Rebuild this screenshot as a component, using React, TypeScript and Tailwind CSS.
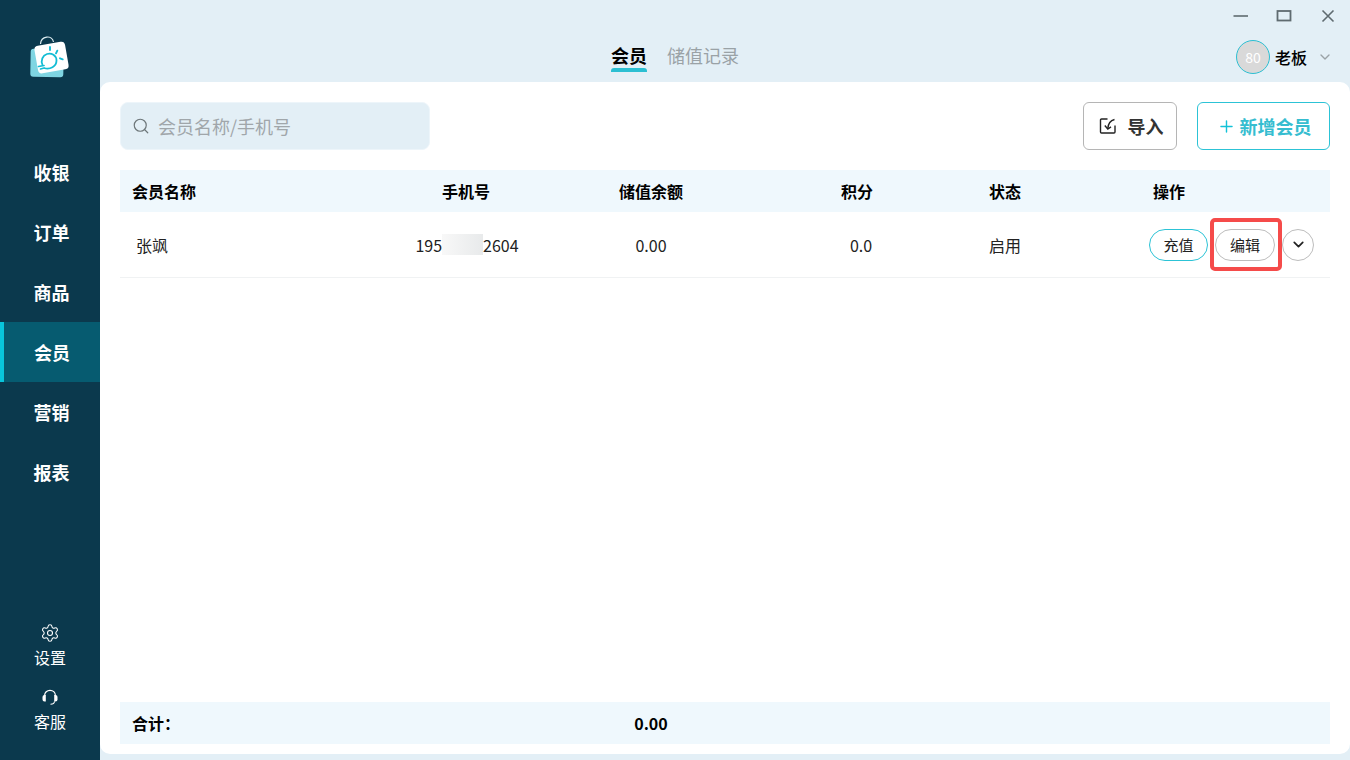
import { ChevronDown, Search, Settings, Plus } from 'lucide-react';

const navItems = ['收银', '订单', '商品', '会员', '营销', '报表'];

function Logo() {
  return (
    <svg width="44" height="44" viewBox="0 0 44 44" fill="none">
      <path d="M11.5 9 C12 0.8 23 -0.5 24.5 7" stroke="#dfeef2" strokeWidth="1.2" />
      <rect x="1.5" y="14" width="33" height="28" rx="3" fill="#7fd5e2" transform="rotate(1 18 28)" />
      <rect x="7" y="8.5" width="31" height="28" rx="4" fill="#ffffff" transform="rotate(-10 22.7 22.3)" />
      <path d="M15 33 C21 35 27.5 31.5 27.5 25.5 C27.5 20.5 22.5 17.5 18 19 C13.5 20.5 11.5 25.5 13.5 30" stroke="#12bcd4" strokeWidth="1.8" />
      <path d="M9.5 31.5 L15 30.5 M11.5 34 L15 33" stroke="#12bcd4" strokeWidth="1.7" strokeLinecap="round" />
      <path d="M21 12 L21 15 M28.3 15.7 L27 18.3 M31 23.3 L33.7 24.3" stroke="#12bcd4" strokeWidth="1.9" strokeLinecap="round" />
    </svg>
  );
}

function Headset() {
  return (
    <svg width="18" height="18" viewBox="0 0 18 18" fill="none">
      <path d="M3.5 8 C3.5 0.5 14.5 0.5 14.5 8" stroke="#ffffff" strokeWidth="1.3" />
      <path d="M1.5 9 a2 2 0 0 1 2 -2 H4.8 V13.5 H3.5 a2 2 0 0 1 -2 -2 Z" fill="#ffffff" />
      <path d="M16.5 9 a2 2 0 0 0 -2 -2 H13.2 V13.5 H14.5 a2 2 0 0 0 2 -2 Z" fill="#ffffff" />
      <path d="M13.5 13.5 C13.2 15.5 11.8 16.2 9.5 16.2" stroke="#ffffff" strokeWidth="1.1" />
    </svg>
  );
}

function ImportIcon() {
  return (
    <svg width="18" height="18" viewBox="0 0 18 18" fill="none" stroke="#222222" strokeWidth="1.4">
      <path d="M8.5 2 H2.5 a1 1 0 0 0 -1 1 V15 a1 1 0 0 0 1 1 H15 a1 1 0 0 0 1 -1 V8.5" />
      <path d="M15.5 2.5 C11.5 3.5 9.2 6.5 8.8 11.5" />
      <path d="M5.8 8.5 L8.8 12 L12 9.8" />
    </svg>
  );
}

function WindowControls() {
  return (
    <div className="absolute left-[1133px] top-[9px] flex items-center">
      <svg width="16" height="14" viewBox="0 0 16 14" fill="none" stroke="#5f6b70" strokeWidth="1.6">
        <path d="M0.5 7 H15" />
      </svg>
      <svg width="16" height="14" viewBox="0 0 16 14" fill="none" stroke="#5f6b70" strokeWidth="1.8" className="ml-[27px]">
        <rect x="1.5" y="2" width="13" height="9.5" />
      </svg>
      <svg width="14" height="14" viewBox="0 0 14 14" fill="none" stroke="#5f6b70" strokeWidth="1.6" className="ml-[29px]">
        <path d="M1.5 1.5 L12.5 12.5 M12.5 1.5 L1.5 12.5" />
      </svg>
    </div>
  );
}

function Sidebar() {
  return (
    <aside className="w-[100px] shrink-0 bg-[#0b394d] flex flex-col">
      <div className="h-[82px] flex items-end pl-[29px] pb-[3px]">
        <Logo />
      </div>
      <nav className="mt-[60px] flex flex-col">
        {navItems.map((item) => (
          <div
            key={item}
            className={
              item === '会员'
                ? 'h-[60px] flex items-center justify-center text-[18px] font-bold text-white bg-[#065b70] border-l-4 border-[#08c6dc]'
                : 'h-[60px] flex items-center justify-center pl-[3px] text-[18px] font-bold text-white'
            }
          >
            {item}
          </div>
        ))}
      </nav>
      <div className="mt-auto pb-[28px] flex flex-col items-center text-white text-[16px] leading-[22px]">
        <Settings size={20} strokeWidth={1.3} />
        <span className="mt-[3px]">设置</span>
        <div className="mt-[20px]"><Headset /></div>
        <span className="mt-[4px]">客服</span>
      </div>
    </aside>
  );
}

function TopBar() {
  return (
    <header className="h-[82px] relative flex justify-center pr-[100px] shrink-0">
      <div className="mt-[41px] flex gap-[20px] text-[18px] leading-[28px]">
        <div className="flex flex-col items-center">
          <span className="font-bold text-black">会员</span>
          <span className="w-[36px] h-[4px] -mt-[1px] rounded-t-[3px] bg-[#2cbfd2]" />
        </div>
        <span className="text-[#9aa2a6]">储值记录</span>
      </div>
      <WindowControls />
      <div className="absolute left-[1136px] top-[40px] flex items-center">
        <div className="w-[34px] h-[34px] rounded-full border border-[#2cbfd2] bg-[#d9d9d9] text-white text-[14px] flex items-center justify-center">80</div>
        <span className="ml-[5px] text-[16px] font-medium text-black">老板</span>
        <ChevronDown size={16} className="ml-[10px] text-[#9aa2a6]" />
      </div>
    </header>
  );
}

const cols = 'grid grid-cols-[250px_192px_178px_234px_62px_1fr] items-center';

function MemberTable() {
  return (
    <div className="flex-1 flex flex-col">
      <div className={`${cols} h-[42px] bg-[#eff8fd] text-[16px] font-bold text-black`}>
        <span className="pl-[12px]">会员名称</span>
        <span className="text-center">手机号</span>
        <span className="text-center">储值余额</span>
        <span className="text-center">积分</span>
        <span className="text-center">状态</span>
        <span className="text-center pr-[28px]">操作</span>
      </div>
      <div className={`${cols} h-[66px] border-b border-[#f0f2f3] text-[16px] text-[#222222] relative`}>
        <span className="pl-[16px]">张飒</span>
        <span className="flex justify-center items-center pl-[2px]">
          195
          <span className="w-[41px] h-[21px] bg-gradient-to-r from-[#f8f8f8] to-[#e8eaeb]" />
          2604
        </span>
        <span className="text-center">0.00</span>
        <span className="text-center pl-[8px]">0.0</span>
        <span className="text-center">启用</span>
        <div className="flex items-center justify-end pr-[16px] gap-[7px] text-[15px]">
          <button className="w-[59px] h-[32px] pt-[2px] rounded-full border border-[#2cc3d6] bg-white">充值</button>
          <button className="w-[60px] h-[32px] pt-[2px] rounded-full border border-[#bdbdbd] bg-white">编辑</button>
          <button className="w-[32px] h-[32px] rounded-full border border-[#bdbdbd] bg-white flex items-center justify-center">
            <ChevronDown size={17} strokeWidth={2.4} className="text-[#222222]" />
          </button>
        </div>
        <div className="absolute left-[1090px] top-[6px] w-[72px] h-[53px] border-[4px] border-[#f54b4a] rounded-[5px]" />
      </div>
      <div className={`${cols} h-[42px] pb-[1px] bg-[#eff8fd] text-[16px] font-bold text-black mt-auto`}>
        <span className="pl-[12px]">合计：</span>
        <span />
        <span className="text-center">0.00</span>
      </div>
    </div>
  );
}

export default function App() {
  return (
    <div
      className="w-[1350px] h-[760px] flex overflow-hidden bg-[#e3eff6]"
      style={{ fontFamily: '"Noto Sans CJK SC", "Noto Sans", sans-serif' }}
    >
      <Sidebar />
      <main className="flex-1 flex flex-col">
        <TopBar />
        <section className="h-[672px] bg-white rounded-t-[10px] rounded-b-[10px] px-[20px] pt-[20px] pb-[10px] flex flex-col">
          <div className="flex items-center h-[48px] mb-[20px]">
            <div className="w-[310px] h-[48px] rounded-[8px] bg-[#e3eff6] border border-[#edf5fa] flex items-center pl-[11px] text-[#a0a6aa] text-[18px]">
              <Search size={18} strokeWidth={1.6} className="text-[#6d7679]" />
              <span className="ml-[8px]">会员名称/手机号</span>
            </div>
            <button className="ml-auto w-[94px] h-[48px] pl-[2px] rounded-[6px] border border-[#b5b5b5] flex items-center justify-center gap-[11px] text-[18px] font-bold text-[#333333]">
              <ImportIcon />
              导入
            </button>
            <button className="ml-[20px] w-[133px] h-[48px] pl-[1px] rounded-[6px] border border-[#2cc3d6] flex items-center justify-center gap-[4px] text-[18px] font-bold text-[#36bdd0]">
              <Plus size={19} strokeWidth={1.8} className="text-[#12c2d8]" />
              新增会员
            </button>
          </div>
          <MemberTable />
        </section>
      </main>
    </div>
  );
}
